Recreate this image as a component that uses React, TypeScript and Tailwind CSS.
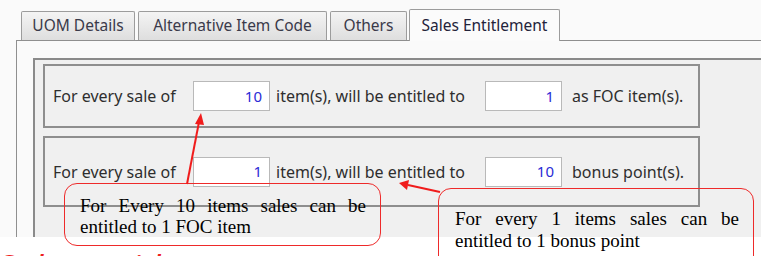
import React from 'react';

const tabs = [
  { label: 'UOM Details', w: 'w-[114px]' },
  { label: 'Alternative Item Code', w: 'w-[189px]' },
  { label: 'Others', w: 'w-[77px]' },
];

const ui = { fontFamily: '"Noto Sans", "DejaVu Sans", sans-serif' };
const serif = { fontFamily: '"Liberation Serif", "Times New Roman", serif' };

function NumBox({ value }: { value: string }) {
  return (
    <div className="w-[77px] h-[30px] bg-white border border-[#b9b9b9] flex items-center justify-end pr-[7px] text-[#2b2bd6] text-[15px]">
      {value}
    </div>
  );
}

function Row({ a, b, tail, h }: { a: string; b: string; tail: string; h: string }) {
  return (
    <div className={`ml-[8px] w-[657px] ${h} border-2 border-[#8e8e8e] flex items-center text-[16px] text-[#2e2e2e]`}>
      <span className="w-[148px] pl-[8px]">For every sale of</span>
      <NumBox value={a} />
      <span className="w-[215px] pl-[6px]">item(s), will be entitled to</span>
      <NumBox value={b} />
      <span className="pl-[10px]">{tail}</span>
    </div>
  );
}

export default function App() {
  return (
    <div className="relative w-[761px] h-[256px] overflow-hidden bg-white" style={ui}>
      <div className="h-[237px] bg-[#fafafa] flex flex-col">
        {/* tab strip */}
        <div className="flex items-end h-[41px] pl-[21px] gap-[3px] relative z-10">
          {tabs.map(t => (
            <div
              key={t.label}
              className={`${t.w} h-[29px] mb-[1px] border border-b-0 border-[#9c9c9c] rounded-t-[2px] bg-gradient-to-b from-[#f4f4f4] to-[#dedede] flex items-center justify-center text-[15.5px] text-[#3a3a4a]`}
            >
              {t.label}
            </div>
          ))}
          <div className="w-[151px] h-[32px] border border-b-0 border-[#9c9c9c] rounded-t-[2px] bg-[#fbfbfb] flex items-center justify-center text-[15.5px] text-[#23233a] -ml-[1px]">
            Sales Entitlement
          </div>
        </div>
        {/* tab panel */}
        <div className="flex-1 ml-[16px] -mt-[1px] border-l border-t border-[#8f8f8f] bg-[#fafafa] pt-[17px] pl-[16px]">
          <div className="h-full border-l-2 border-t-2 border-[#8a8a8a] bg-[#f0f0f0] pt-[4px] flex flex-col gap-[8px]">
            <Row a="10" b="1" tail="as FOC item(s)." h="h-[64px]" />
            <Row a="1" b="10" tail="bonus point(s)." h="h-[71px]" />
          </div>
        </div>
      </div>

      {/* annotation callouts */}
      <div
        className="absolute left-[64px] top-[183px] w-[317px] h-[63px] border-[1.5px] border-[#ee2a2a] rounded-[13px] pl-[15px] pr-[14px] pt-[11px] text-[19px] leading-[21px] text-black text-justify [text-align-last:left]"
        style={serif}
      >
        For Every 10 items sales can be entitled to 1 FOC item
      </div>
      <div
        className="absolute left-[438px] top-[188px] w-[316px] h-[100px] border-[1.5px] border-[#ee2a2a] rounded-[13px] pl-[16px] pr-[14px] pt-[19px] text-[19px] leading-[22px] text-black text-justify [text-align-last:left]"
        style={serif}
      >
        For every 1 items sales can be entitled to 1 bonus point
      </div>

      <svg className="absolute inset-0 pointer-events-none" width="761" height="256">
        <line x1="187" y1="184" x2="199" y2="122" stroke="#f01c1c" strokeWidth="2" />
        <polygon points="201,113 195,124 204,125" fill="#f01c1c" />
        <line x1="440" y1="192" x2="408" y2="185" stroke="#f01c1c" strokeWidth="2" />
        <polygon points="399,183 409,180 407,190" fill="#f01c1c" />
      </svg>

      <div className="absolute left-[-2px] top-[250px] text-[34px] italic text-[#ee2020] leading-none" style={ui}>
        Sales entitlement
      </div>
    </div>
  );
}
